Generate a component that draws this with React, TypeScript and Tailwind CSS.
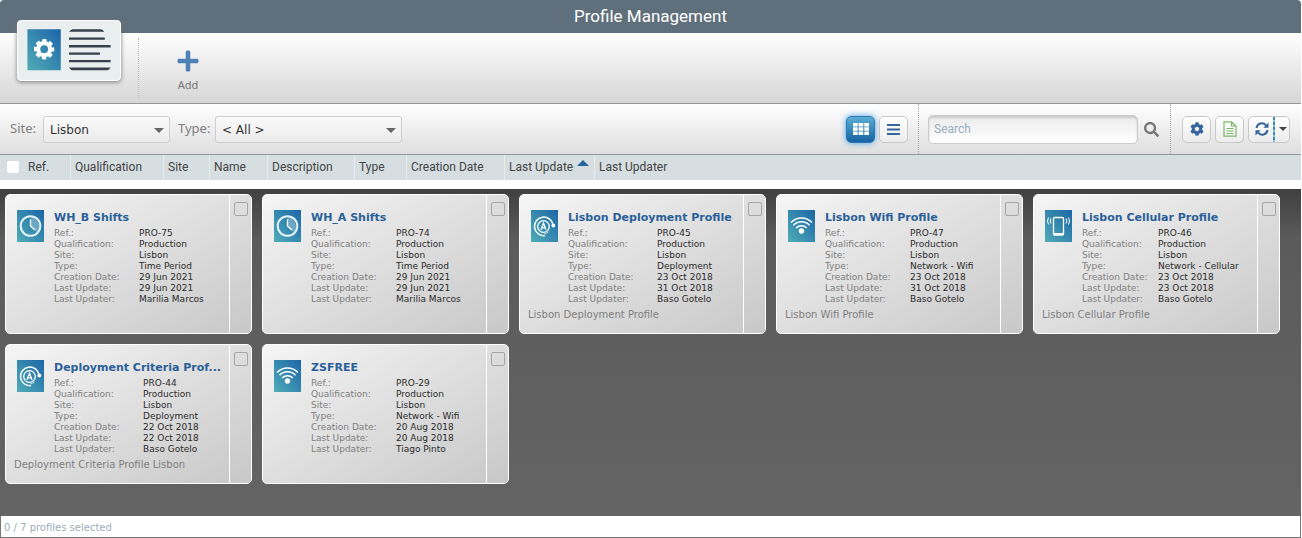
import { useState } from 'react';
import { FaCog, FaPlus, FaSearch } from 'react-icons/fa';

type IconKind = 'clock' | 'deployment' | 'wifi' | 'cellular';

interface Profile {
  ref: string;
  name: string;
  type: string;
  created: string;
  updated: string;
  updater: string;
  icon: IconKind;
  cols: string;
  description?: string;
}

// the value column depends on how long the type text gets
const COLS_NORMAL = 'grid-cols-[85px_1fr]';
const COLS_WIDE = 'grid-cols-[89px_1fr]';
const COLS_NARROW = 'grid-cols-[76px_1fr]';

const profiles: Profile[] = [
  { ref: 'PRO-75', name: 'WH_B Shifts', type: 'Time Period', created: '29 Jun 2021', updated: '29 Jun 2021', updater: 'Marilia Marcos', icon: 'clock', cols: COLS_NORMAL },
  { ref: 'PRO-74', name: 'WH_A Shifts', type: 'Time Period', created: '29 Jun 2021', updated: '29 Jun 2021', updater: 'Marilia Marcos', icon: 'clock', cols: COLS_NORMAL },
  { ref: 'PRO-45', name: 'Lisbon Deployment Profile', type: 'Deployment', created: '23 Oct 2018', updated: '31 Oct 2018', updater: 'Baso Gotelo', icon: 'deployment', cols: COLS_WIDE, description: 'Lisbon Deployment Profile' },
  { ref: 'PRO-47', name: 'Lisbon Wifi Profile', type: 'Network - Wifi', created: '23 Oct 2018', updated: '31 Oct 2018', updater: 'Baso Gotelo', icon: 'wifi', cols: COLS_NORMAL, description: 'Lisbon Wifi Profile' },
  { ref: 'PRO-46', name: 'Lisbon Cellular Profile', type: 'Network - Cellular', created: '23 Oct 2018', updated: '23 Oct 2018', updater: 'Baso Gotelo', icon: 'cellular', cols: COLS_NARROW, description: 'Lisbon Cellular Profile' },
  { ref: 'PRO-44', name: 'Deployment Criteria Prof...', type: 'Deployment', created: '22 Oct 2018', updated: '22 Oct 2018', updater: 'Baso Gotelo', icon: 'deployment', cols: COLS_WIDE, description: 'Deployment Criteria Profile Lisbon' },
  { ref: 'PRO-29', name: 'ZSFREE', type: 'Network - Wifi', created: '20 Aug 2018', updated: '20 Aug 2018', updater: 'Tiago Pinto', icon: 'wifi', cols: COLS_NORMAL },
];

const columns = [
  { label: 'Ref.', width: 'w-[47px]' },
  { label: 'Qualification', width: 'w-[93px]' },
  { label: 'Site', width: 'w-[46px]' },
  { label: 'Name', width: 'w-[58px]' },
  { label: 'Description', width: 'w-[87px]' },
  { label: 'Type', width: 'w-[52px]' },
  { label: 'Creation Date', width: 'w-[98px]' },
  { label: 'Last Update', width: 'w-[90px]' },
  { label: 'Last Updater', width: 'w-auto' },
];

function ProfileIcon({ kind }: { kind: IconKind }) {
  return (
    <svg
      viewBox="0 0 27 32"
      className="h-8 w-[27px] shrink-0 bg-linear-to-tr from-[#51acb6] to-[#1d66a6]"
      fill="none"
      stroke="#fff"
      aria-hidden="true"
    >
      {kind === 'clock' && (
        <>
          <circle cx="13.5" cy="16" r="9.8" strokeWidth="2" stroke="#e4f2f8" />
          <path d="M13.5 16V7.5a8.500 8.500 0 0 1 6 14.500z" fill="#fff" fillOpacity=".3" stroke="none" />
          <path d="M13.500 9.500v6.500l4.500 4" strokeWidth="1.300" />
        </>
      )}
      {kind === 'deployment' && (
        <>
          <circle cx="12.500" cy="16.500" r="5.800" strokeWidth="1.300" />
          <path d="M10 19.800L12.500 13.200l2.500 6.600M10.900 17.800h3.200" strokeWidth="1.300" />
          <path d="M14 25.600A9.300 9.300 0 1 1 22 15" strokeWidth="1.500" />
          <path d="M13.500 23.700A7.500 7.500 0 0 0 17.500 22" strokeWidth="1" opacity=".7" />
          <circle cx="22.300" cy="15.500" r="1.900" fill="#fff" stroke="none" />
        </>
      )}
      {kind === 'wifi' && (
        <>
          <circle cx="13.500" cy="21" r="2.700" fill="#fff" stroke="none" />
          <path d="M3 12.500a14.500 14.500 0 0 1 21 0M5.500 15.300a11 11 0 0 1 16 0M8.200 17.900a7.400 7.400 0 0 1 10.600 0" strokeWidth="1.500" />
        </>
      )}
      {kind === 'cellular' && (
        <>
          <rect x="8.500" y="7.500" width="10" height="17.500" rx="1.300" strokeWidth="1.300" />
          <path d="M8.500 24h10" strokeWidth="2" />
          <path d="M6 8.500q-1.600 2.500 0 5M3.500 7.500q-2 3.500 0 7M21 8.500q1.600 2.500 0 5M23.500 7.500q2 3.500 0 7" strokeWidth="1" />
        </>
      )}
    </svg>
  );
}

function ProfileCard({ profile }: { profile: Profile }) {
  const rows = [
    ['Ref.:', profile.ref],
    ['Qualification:', 'Production'],
    ['Site:', 'Lisbon'],
    ['Type:', profile.type],
    ['Creation Date:', profile.created],
    ['Last Update:', profile.updated],
    ['Last Updater:', profile.updater],
  ];

  return (
    <article className="flex h-[140px] w-[247px] overflow-hidden rounded-[5px] border border-white bg-linear-to-br from-[#f5f5f5] to-[#c8c8c8] font-['DejaVu_Sans',sans-serif] text-[9px] leading-[11px]">
      <div className="flex min-w-0 flex-1 flex-col border-r border-white">
        <div className="flex gap-[10px] pt-[15px] pl-[11px]">
          <ProfileIcon kind={profile.icon} />
          <div className="min-w-0 flex-1">
            <h2 className="text-[11px] leading-4 font-bold whitespace-nowrap text-[#2a6099]">{profile.name}</h2>
            <dl className="mt-[2px]">
              {rows.map(([label, value]) => (
                <div key={label} className={'grid whitespace-nowrap ' + profile.cols}>
                  <dt className="text-[#808080]">{label}</dt>
                  <dd className="text-[#2b2b2b]">{value}</dd>
                </div>
              ))}
            </dl>
          </div>
        </div>
        {profile.description && (
          <p className="mt-1 px-2 text-[10px] whitespace-nowrap text-[#808080]">{profile.description}</p>
        )}
      </div>
      <div className="w-[21px] pt-[7px] pl-1">
        <input
          type="checkbox"
          aria-label={'Select ' + profile.name}
          className="block size-[14px] appearance-none rounded-xs border border-[#a5a5a5] checked:bg-[#2a6099]"
        />
      </div>
    </article>
  );
}

export default function App() {
  const [view, setView] = useState<'grid' | 'list'>('grid');

  const button = 'flex h-[27px] w-[29px] items-center justify-center rounded-[5px] border';
  const idle = 'border-[#c9c9c9] bg-linear-to-b from-white to-[#ececec] text-[#35659c]';
  const active = 'border-[#2b78b5] bg-linear-to-b from-[#5aaed3] to-[#1762a3] text-white shadow-[0_0_6px_#4da3e8]';
  const select =
    "h-[27px] appearance-none rounded-[3px] border border-[#cfcfcf] bg-linear-to-b from-[#fafafa] to-[#ebebeb] pt-px pl-[6px] font-['DejaVu_Sans',sans-serif] text-[12px] text-[#333]";

  return (
    <div className="flex min-h-screen flex-col bg-white pr-px font-[Roboto,sans-serif]">
      <header className="h-[33px] rounded-t-[4px] bg-[#5f707c] text-center text-[17px] leading-8 text-white">
        <h1>Profile Management</h1>
      </header>

      {/* ribbon */}
      <div className="flex h-[71px] border-b border-[#979797] bg-linear-to-b from-white to-[#d6d6d6]">
        <div className="relative w-[138px]">
          <svg viewBox="0 0 104 61" className="absolute -top-[13px] left-[17px] h-[61px] w-[104px] rounded-[4px] border border-white bg-[#e9eeef] shadow-[0_1px_4px_#777]" aria-hidden="true">
            <defs>
              <linearGradient id="tile" x1="0" y1="1" x2="1" y2="0">
                <stop offset="0" stopColor="#53acb5" />
                <stop offset="1" stopColor="#1a65aa" />
              </linearGradient>
            </defs>
            <path d="M9 8.500h34.500v42.500H9z" fill="url(#tile)" />
            <g stroke="#fff" fill="none">
              <circle cx="26.300" cy="29.200" r="6.200" strokeWidth="4.400" />
              <circle cx="26.300" cy="29.200" r="9" strokeWidth="3" strokeDasharray="4.400 2.670" strokeDashoffset="2.200" />
            </g>
            <path d="M54 9.300q1-.8 2-.8h29q2 .2 3.500 2.700H52zM52 17h37v2.500H52zM52 24.800h43v2.500H52zM52 32.500h32v2.500H52zM52 40.200h43v2.500H52zM52 48h43q-1.500 2.800-4 2.800H56q-2.500 0-4-2.800z" fill="#37414d" />
          </svg>
        </div>
        <div className="my-[5px] border-l border-dotted border-[#bbb]" />
        <button className="flex w-[98px] flex-col items-center pt-4 font-['Noto_Sans',sans-serif] text-[11px] leading-4 text-[#777]">
          <FaPlus className="mb-1 size-6 text-[#4f80b5]" />
          Add
        </button>
      </div>

      {/* filters and view switches */}
      <div className="flex h-[51px] items-center border-b border-[#979797] bg-linear-to-b from-white to-[#dedede] text-[#808080]">
        <label htmlFor="site" className="w-[43px] pl-[10px] font-['Noto_Sans',sans-serif] text-[13px]">Site:</label>
        <div className="relative flex">
          <select id="site" className={select + ' w-[127px]'}>
            <option>Lisbon</option>
          </select>
          <span className="pointer-events-none absolute top-[12px] right-[6px] border-x-5 border-t-5 border-x-transparent border-t-[#666]" />
        </div>
        <label htmlFor="type" className="w-[45px] pl-2 font-['Noto_Sans',sans-serif] text-[13px]">Type:</label>
        <div className="relative flex">
          <select id="type" className={select + ' w-[187px]'}>
            <option>&lt; All &gt;</option>
          </select>
          <span className="pointer-events-none absolute top-[12px] right-[6px] border-x-5 border-t-5 border-x-transparent border-t-[#666]" />
        </div>

        <div className="ml-auto flex gap-1">
          <button aria-label="Grid view" onClick={() => setView('grid')} className={button + ' ' + (view === 'grid' ? active : idle)}>
            <svg viewBox="0 0 16 12" className="h-3 w-4" fill="currentColor">
              <path d="M0 0h4.700v3.500H0zM5.600 0h4.700v3.500H5.600zM11.300 0H16v3.500h-4.700zM0 4.300h4.700v3.400H0zM5.600 4.300h4.700v3.400H5.600zM11.300 4.300H16v3.400h-4.700zM0 8.500h4.700V12H0zM5.600 8.500h4.700V12H5.600zM11.300 8.500H16V12h-4.700z" />
            </svg>
          </button>
          <button aria-label="List view" onClick={() => setView('list')} className={button + ' ' + (view === 'list' ? active : idle)}>
            <svg viewBox="0 0 13 11" className="h-[11px] w-[13px]" fill="currentColor">
              <path d="M0 0h13v2H0zM0 4.500h13v2H0zM0 9h13v2H0z" />
            </svg>
          </button>
        </div>
        <form className="ml-[10px] flex h-full items-center border-l border-dotted border-[#aaa] pl-[9px]" onSubmit={(e) => e.preventDefault()}>
          <input
            type="search"
            aria-label="Search"
            placeholder="Search"
            className="h-[29px] w-[210px] rounded-[5px] border border-[#ccc] bg-linear-to-b from-[#ebebeb] to-white px-[5px] text-[12px] text-[#333] shadow-[inset_0_2px_2px_#ccc] placeholder:text-[#9caebb]"
          />
          <button aria-label="Run search" className="flex w-8 justify-center text-[#777]">
            <FaSearch className="mr-[6px] size-[15px]" />
          </button>
        </form>
        <div className="flex h-full items-center gap-1 border-l border-dotted border-[#aaa] px-[11px]">
          <button aria-label="Settings" className={button + ' ' + idle}>
            <FaCog className="size-[14px]" />
          </button>
          <button aria-label="Export" className={button + ' ' + idle}>
            <svg viewBox="0 0 14 16" className="h-4 w-[14px]" fill="none" stroke="#7cb86a">
              <path d="M1 .8h7.500L13 5v10.200H1zM8.500.8V5H13M3.500 7.500h7M3.500 10h7M3.500 12.500h7" strokeWidth="1.200" />
            </svg>
          </button>
          <button aria-label="Refresh" className={'flex h-[27px] w-[42px] items-center rounded-[5px] border pl-[6px] ' + idle}>
            <svg viewBox="0 0 14 14" className="size-[14px]" fill="none" stroke="currentColor" strokeWidth="2">
              <path d="M1.500 6A5.400 5.400 0 0 1 11 3.300M12.500 8A5.400 5.400 0 0 1 3 10.700" />
              <path d="M13.500.5v5.200H8.300zM.5 13.500V8.300h5.200z" fill="currentColor" stroke="none" />
            </svg>
            <span className="ml-1 h-full w-[2px] bg-[repeating-linear-gradient(to_bottom,#3c8ab5_0_3px,#8cc4d0_3px_5px)]" />
            <span className="ml-1 border-x-4 border-t-4 border-x-transparent border-t-[#444]" />
          </button>
        </div>
      </div>

      <table className="mb-[9px] block bg-[#d6dee2] text-[12px] text-[#444]">
        <thead className="block">
          <tr className="flex h-[25px]">
            <th className="w-[24px] pt-[6px] pl-[7px]">
              <input type="checkbox" aria-label="Select all" className="block size-3 appearance-none rounded-xs bg-white checked:bg-[#2a6099]" />
            </th>
            {columns.map((col) => (
              <th key={col.label} className={'relative border-r border-[#e8edef] pl-1 text-left leading-[24px] font-normal last:border-0 ' + col.width}>
                {col.label}
                {col.label === 'Last Update' && (
                  <span className="absolute top-[5px] right-[5px] border-x-6 border-b-6 border-x-transparent border-b-[#26659b]" />
                )}
              </th>
            ))}
          </tr>
        </thead>
      </table>

      <main className="flex flex-1 flex-wrap content-start gap-[10px] bg-linear-to-b from-[#404040] via-[#5b5b5b] via-15% to-[#646464] p-[5px]">
        {profiles.map((p) => (
          <ProfileCard key={p.ref} profile={p} />
        ))}
      </main>

      <footer className="h-[22px] border-x border-b border-[#777] pl-[3px] font-['DejaVu_Sans',sans-serif] text-[10px] leading-6 text-[#9caebb]">
        0 / 7 profiles selected
      </footer>
    </div>
  );
}
